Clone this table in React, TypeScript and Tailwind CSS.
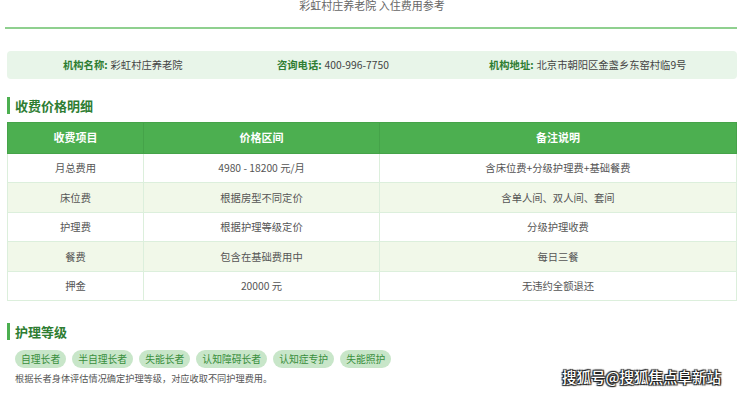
const font = { fontFamily: '"Noto Sans CJK SC", "Noto Sans", sans-serif' };

const info = [
  { label: "机构名称:", value: "彩虹村庄养老院" },
  { label: "咨询电话:", value: "400-996-7750" },
  { label: "机构地址:", value: "北京市朝阳区金盏乡东窑村临9号" },
];

const rows = [
  { item: "月总费用", price: "4980 - 18200 元/月", note: "含床位费+分级护理费+基础餐费" },
  { item: "床位费", price: "根据房型不同定价", note: "含单人间、双人间、套间" },
  { item: "护理费", price: "根据护理等级定价", note: "分级护理收费" },
  { item: "餐费", price: "包含在基础费用中", note: "每日三餐" },
  { item: "押金", price: "20000 元", note: "无违约全额退还" },
];

const levels = ["自理长者", "半自理长者", "失能长者", "认知障碍长者", "认知症专护", "失能照护"];

function SectionTitle({ children }: { children: string }) {
  return (
    <div className="flex h-[17px] items-center border-l-[3px] border-[#4caf50] pl-[5px]">
      <h2 className="text-[13px] font-bold leading-none text-[#2e7d32]">{children}</h2>
    </div>
  );
}

export default function App() {
  return (
    <div className="relative h-[393px] w-[740px] overflow-hidden bg-white" style={font}>
      <div className="pl-[7px] pr-[3px]">
        {/* Title */}
        <p className="-mt-[3px] h-[16px] text-center text-[11px] leading-[16px] text-[#666]">
          彩虹村庄养老院 入住费用参考
        </p>
        <div className="-ml-[2px] mt-[14px] h-[1.5px] bg-[#8fd08f]" />

        {/* Info bar */}
        <div className="mt-[22px] grid h-[28px] grid-cols-[214px_212px_1fr] items-center rounded-[4px] bg-[#e8f5e9] pl-[56px] text-[10.3px]">
          {info.map((i) => (
            <div key={i.label} className="whitespace-nowrap">
              <span className="font-bold text-[#2e7d32]">{i.label}</span>
              <span className="ml-[3px] text-[#444]">{i.value}</span>
            </div>
          ))}
        </div>

        {/* Price table */}
        <div className="mt-[18px]">
          <SectionTitle>收费价格明细</SectionTitle>
        </div>
        <table className="mt-[8px] w-full table-fixed border-collapse text-[10.3px]">
          <colgroup>
            <col className="w-[136px]" />
            <col className="w-[236px]" />
            <col />
          </colgroup>
          <thead>
            <tr className="h-[31px] bg-[#4caf50] text-[11px] text-white">
              <th className="border border-[#45a349] font-bold">收费项目</th>
              <th className="border border-[#45a349] font-bold">价格区间</th>
              <th className="border border-[#45a349] font-bold">备注说明</th>
            </tr>
          </thead>
          <tbody className="text-[#555]">
            {rows.map((r, idx) => (
              <tr key={r.item} className={idx % 2 === 1 ? "h-[29.6px] bg-[#f1f8e9]" : "h-[29.6px] bg-white"}>
                <td className="border border-[#dcefdc] text-center">{r.item}</td>
                <td className="border border-[#dcefdc] text-center">{r.price}</td>
                <td className="border border-[#dcefdc] text-center">{r.note}</td>
              </tr>
            ))}
          </tbody>
        </table>

        {/* Care levels */}
        <div className="mt-[22px]">
          <SectionTitle>护理等级</SectionTitle>
        </div>
        <div className="mt-[10px] flex gap-[6px] pl-[8px]">
          {levels.map((l) => (
            <span
              key={l}
              className="flex h-[18px] items-center rounded-full bg-[#c8e6c9] px-[6px] text-[9.8px] text-[#388e3c]"
            >
              {l}
            </span>
          ))}
        </div>
        <p className="mt-[3px] pl-[8px] text-[9.2px] leading-[14px] text-[#555]">
          根据长者身体评估情况确定护理等级，对应收取不同护理费用。
        </p>
      </div>

      {/* Watermark */}
      <div
        className="absolute left-[562px] top-[367px] text-[14.5px] font-medium leading-[20px] text-white"
        style={{ textShadow: "0 0 1px #000, 1px 1px 1px #222, -1px -1px 1px #222, 1px -1px 1px #222, -1px 1px 1px #222" }}
      >
        搜狐号@搜狐焦点阜新站
      </div>
    </div>
  );
}
